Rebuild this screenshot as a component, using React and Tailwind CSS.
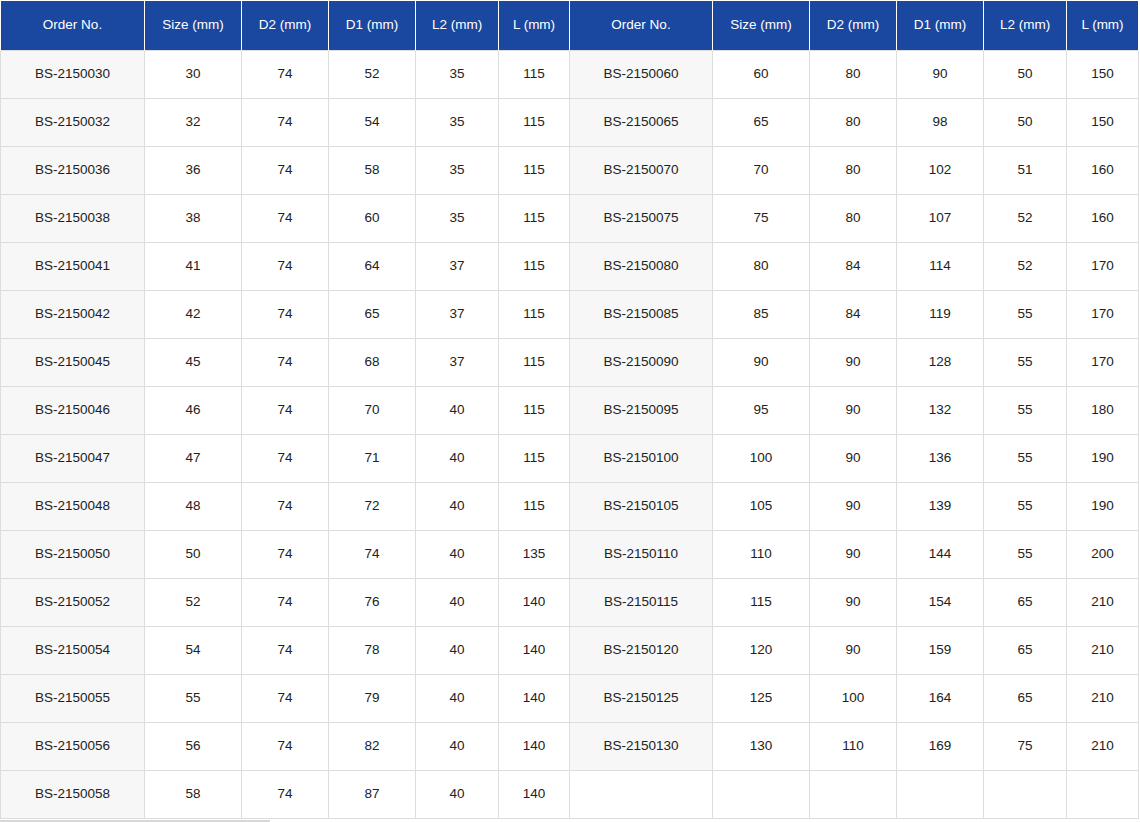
const widths = [144, 97, 87, 87, 83, 71, 143, 97, 87, 87, 83, 72];
const heads = ["Order No.", "Size (mm)", "D2 (mm)", "D1 (mm)", "L2 (mm)", "L (mm)"];

const left = [
  ["BS-2150030", 30, 74, 52, 35, 115],
  ["BS-2150032", 32, 74, 54, 35, 115],
  ["BS-2150036", 36, 74, 58, 35, 115],
  ["BS-2150038", 38, 74, 60, 35, 115],
  ["BS-2150041", 41, 74, 64, 37, 115],
  ["BS-2150042", 42, 74, 65, 37, 115],
  ["BS-2150045", 45, 74, 68, 37, 115],
  ["BS-2150046", 46, 74, 70, 40, 115],
  ["BS-2150047", 47, 74, 71, 40, 115],
  ["BS-2150048", 48, 74, 72, 40, 115],
  ["BS-2150050", 50, 74, 74, 40, 135],
  ["BS-2150052", 52, 74, 76, 40, 140],
  ["BS-2150054", 54, 74, 78, 40, 140],
  ["BS-2150055", 55, 74, 79, 40, 140],
  ["BS-2150056", 56, 74, 82, 40, 140],
  ["BS-2150058", 58, 74, 87, 40, 140],
];

const right = [
  ["BS-2150060", 60, 80, 90, 50, 150],
  ["BS-2150065", 65, 80, 98, 50, 150],
  ["BS-2150070", 70, 80, 102, 51, 160],
  ["BS-2150075", 75, 80, 107, 52, 160],
  ["BS-2150080", 80, 84, 114, 52, 170],
  ["BS-2150085", 85, 84, 119, 55, 170],
  ["BS-2150090", 90, 90, 128, 55, 170],
  ["BS-2150095", 95, 90, 132, 55, 180],
  ["BS-2150100", 100, 90, 136, 55, 190],
  ["BS-2150105", 105, 90, 139, 55, 190],
  ["BS-2150110", 110, 90, 144, 55, 200],
  ["BS-2150115", 115, 90, 154, 65, 210],
  ["BS-2150120", 120, 90, 159, 65, 210],
  ["BS-2150125", 125, 100, 164, 65, 210],
  ["BS-2150130", 130, 110, 169, 75, 210],
  ["", "", "", "", "", ""],
];

export default function App() {
  return (
    <div className="w-[1140px] h-[822px] bg-white overflow-hidden text-[13.5px] text-[#222]" style={{ fontFamily: '"Liberation Sans", Arial, sans-serif' }}>
      <table className="table-fixed border-collapse w-[1139px] mt-px">
        <colgroup>
          {widths.map((w, i) => (
            <col key={i} style={{ width: w }} />
          ))}
        </colgroup>
        <thead>
          <tr className="h-[49px] bg-[#1a47a0] text-white">
            {[...heads, ...heads].map((h, i) => (
              <th key={i} className="font-normal border-x border-white">{h}</th>
            ))}
          </tr>
        </thead>
        <tbody>
          {left.map((row, r) => {
            const cells = [...row, ...right[r]];
            return (
              <tr key={r} className="h-[48px]">
                {cells.map((c, i) => (
                  <td
                    key={i}
                    className={`text-center border border-[#dddddd] ${i === 0 || i === 6 ? "bg-[#f7f7f7]" : "bg-white"} ${r === 15 && i === 6 ? "bg-white" : ""}`}
                  >
                    {c}
                  </td>
                ))}
              </tr>
            );
          })}
        </tbody>
      </table>
      <div className="w-[270px] h-[3px] bg-[#d8d8d8] mt-px"></div>
    </div>
  );
}
